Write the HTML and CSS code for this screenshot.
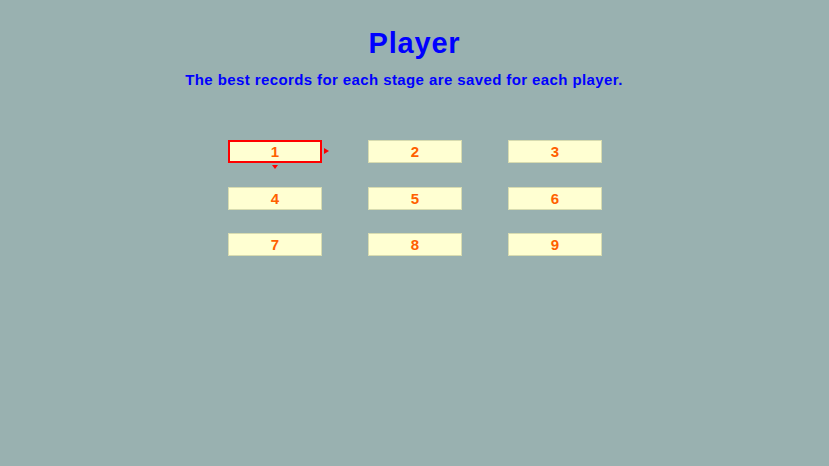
FILE: index.html
```html
<!DOCTYPE html>
<html>
<head>
<meta charset="utf-8">
<link rel="stylesheet" href="styles.css">
</head>
<body>
<div class="page">
  <h1 class="title">Player</h1>
  <p class="subtitle">The best records for each stage are saved for each player.</p>
  <div class="grid">
    <div class="slot selected">1<span class="arrow-right"></span><span class="arrow-down"></span></div>
    <div class="slot">2</div>
    <div class="slot">3</div>
    <div class="slot">4</div>
    <div class="slot">5</div>
    <div class="slot">6</div>
    <div class="slot">7</div>
    <div class="slot">8</div>
    <div class="slot">9</div>
  </div>
</div>
</body>
</html>
```
FILE: styles.css
```css
html, body {
  margin: 0;
  padding: 0;
  background: #99b1b0;
}
.page {
  width: 829px;
  height: 466px;
  display: flex;
  flex-direction: column;
  align-items: center;
  font-family: "Liberation Sans", Arial, sans-serif;
  font-weight: bold;
}
.title {
  margin: 29px 0 0 0;
  font-size: 29px;
  line-height: 28px;
  color: #0000ff;
  letter-spacing: 0.8px;
}
.subtitle {
  margin: 15px 21px 0 0;
  font-size: 15px;
  line-height: 15px;
  color: #0000ff;
  letter-spacing: 0.4px;
}
.grid {
  margin-top: 53px;
  margin-left: 1px;
  display: grid;
  grid-template-columns: repeat(3, 94px);
  grid-auto-rows: 23px;
  column-gap: 46px;
  row-gap: 23.5px;
}
.slot {
  position: relative;
  box-sizing: border-box;
  background: #ffffd2;
  border: 1px solid #d8dcb0;
  color: #ff6000;
  font-size: 15px;
  line-height: 21px;
  text-align: center;
}
.slot.selected {
  border: 2px solid #ff0000;
  line-height: 19px;
}
.arrow-right {
  position: absolute;
  right: -9px;
  top: 6px;
  width: 0;
  height: 0;
  border-top: 3px solid transparent;
  border-bottom: 3px solid transparent;
  border-left: 5px solid #ff0000;
}
.arrow-down {
  position: absolute;
  left: 42px;
  bottom: -8px;
  width: 0;
  height: 0;
  border-left: 3px solid transparent;
  border-right: 3px solid transparent;
  border-top: 4px solid #ff0000;
}
```
